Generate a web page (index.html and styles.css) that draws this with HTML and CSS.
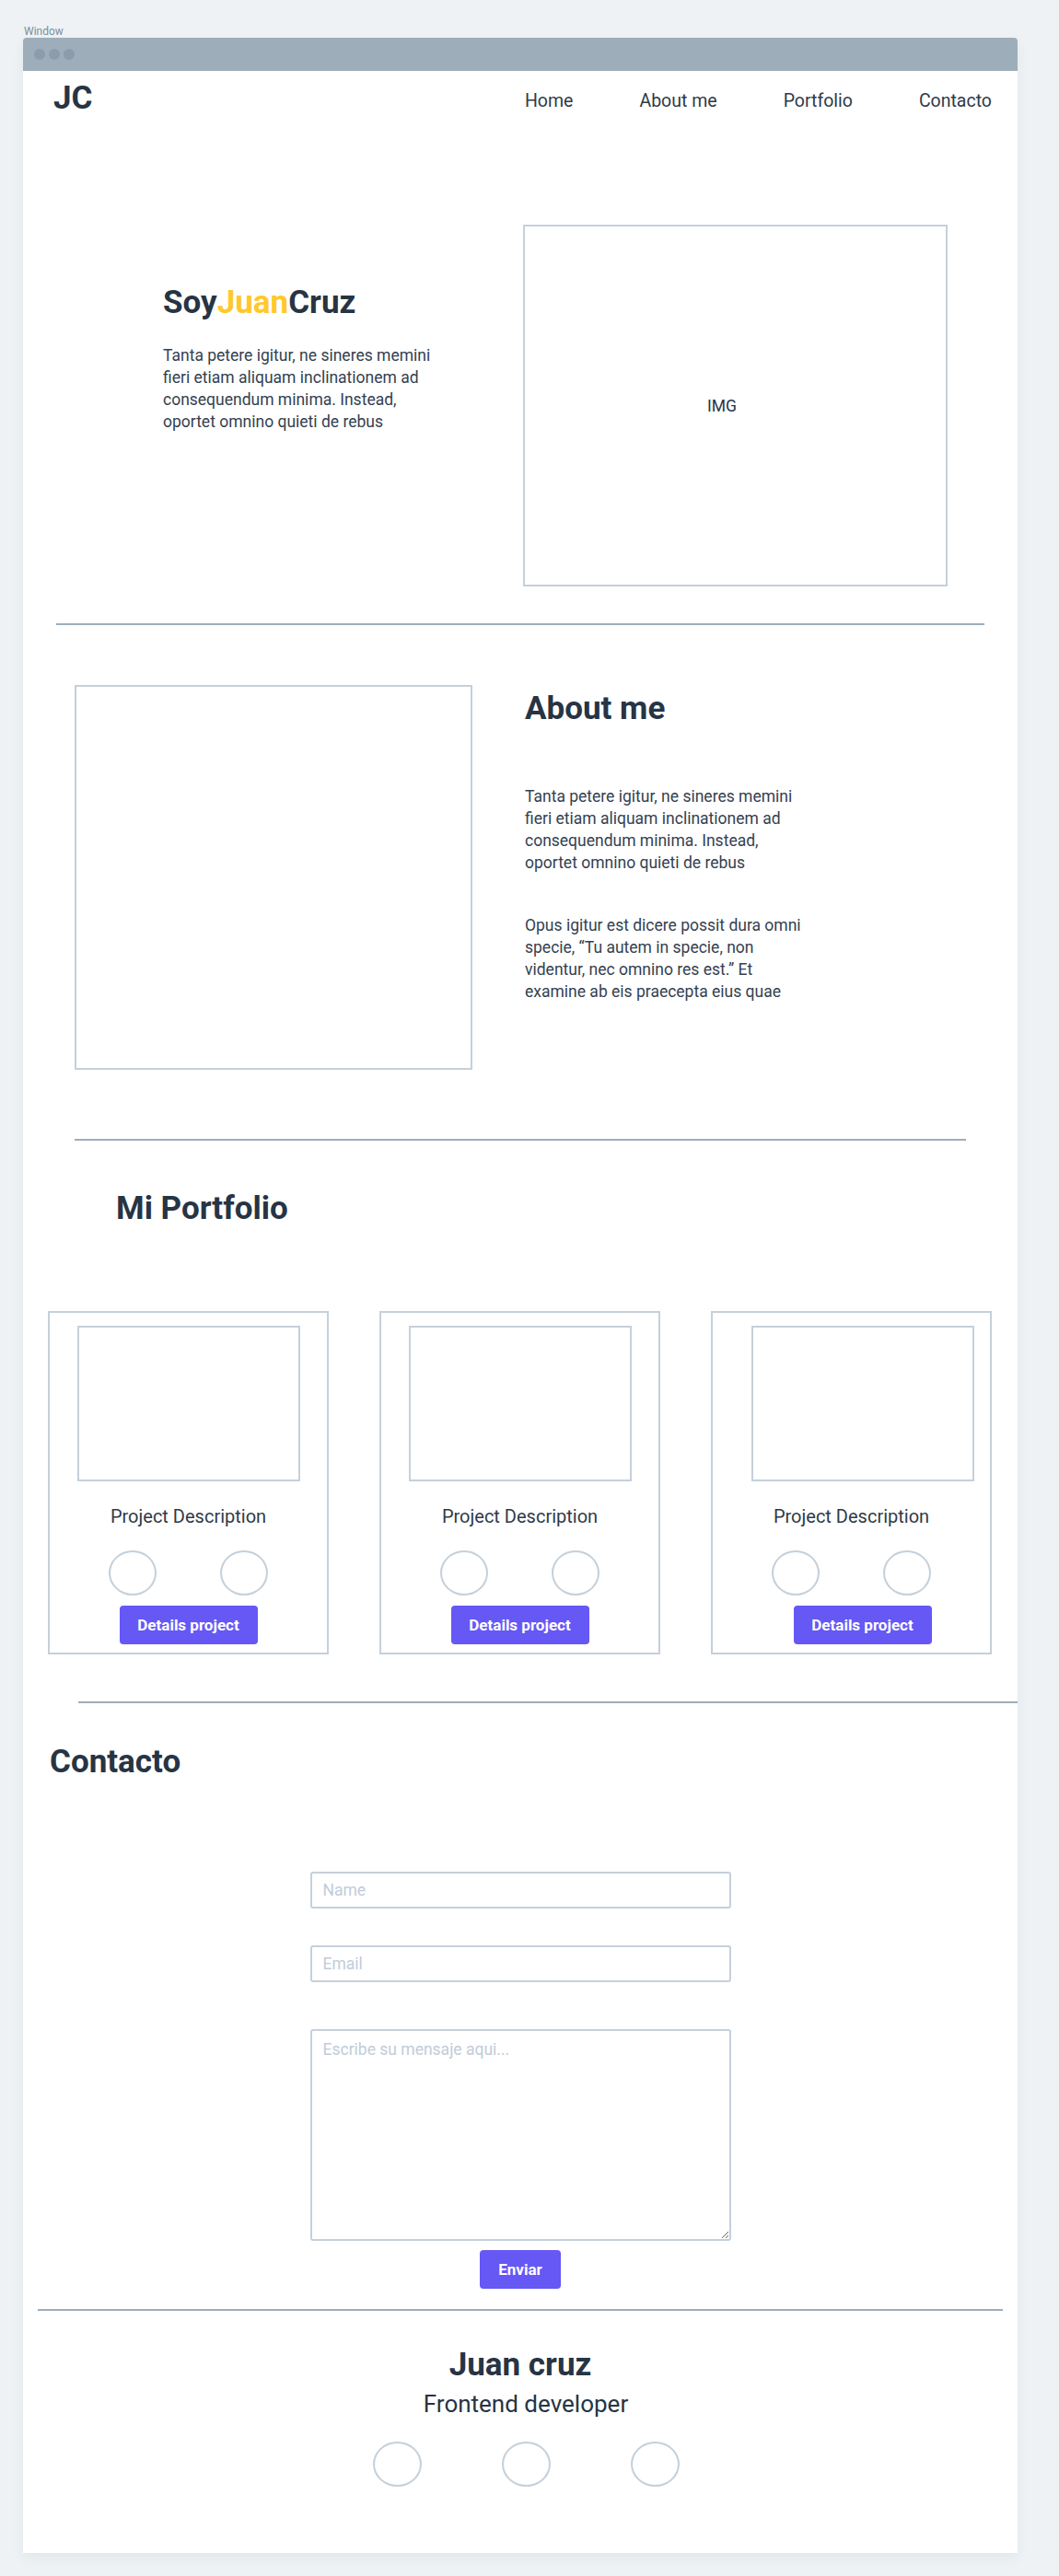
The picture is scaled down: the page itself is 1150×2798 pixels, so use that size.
FILE: index.html
```html
<!DOCTYPE html>
<html lang="es">
<head>
<meta charset="utf-8">
<title>Juan Cruz</title>
<link rel="stylesheet" href="styles.css">
</head>
<body>
<div class="page">
  <div class="label">Window</div>
  <div class="window">
    <div class="titlebar"><span class="dot"></span><span class="dot"></span><span class="dot"></span></div>
    <div class="content">
      <header class="header">
        <div class="logo">JC</div>
        <nav class="nav">
          <a href="#">Home</a>
          <a href="#">About me</a>
          <a href="#">Portfolio</a>
          <a href="#">Contacto</a>
        </nav>
      </header>

      <section class="hero">
        <div class="hero-text">
          <h1 class="title">Soy<span class="accent">Juan</span>Cruz</h1>
          <p class="text">Tanta petere igitur, ne sineres memini<br>fieri etiam aliquam inclinationem ad<br>consequendum minima. Instead,<br>oportet omnino quieti de rebus</p>
        </div>
        <div class="img-box hero-img"><span>IMG</span></div>
      </section>

      <div class="divider divider-1"></div>

      <section class="about">
        <div class="img-box about-img"></div>
        <div class="about-text">
          <h2 class="title">About me</h2>
          <p class="text">Tanta petere igitur, ne sineres memini<br>fieri etiam aliquam inclinationem ad<br>consequendum minima. Instead,<br>oportet omnino quieti de rebus</p>
          <p class="text">Opus igitur est dicere possit dura omni<br>specie, “Tu autem in specie, non<br>videntur, nec omnino res est.” Et<br>examine ab eis praecepta eius quae</p>
        </div>
      </section>

      <div class="divider divider-2"></div>

      <section class="portfolio">
        <h2 class="title portfolio-title">Mi Portfolio</h2>
        <div class="cards">
          <div class="card">
            <div class="img-box card-media"></div>
            <div class="card-desc">Project Description</div>
            <div class="card-links"><span class="circle"></span><span class="circle"></span></div>
            <button class="btn card-btn" type="button">Details project</button>
          </div>
          <div class="card">
            <div class="img-box card-media"></div>
            <div class="card-desc">Project Description</div>
            <div class="card-links"><span class="circle"></span><span class="circle"></span></div>
            <button class="btn card-btn" type="button">Details project</button>
          </div>
          <div class="card card--offset">
            <div class="img-box card-media"></div>
            <div class="card-desc">Project Description</div>
            <div class="card-links"><span class="circle"></span><span class="circle"></span></div>
            <button class="btn card-btn" type="button">Details project</button>
          </div>
        </div>
      </section>

      <div class="divider divider-3"></div>

      <section class="contact">
        <h2 class="title contact-title">Contacto</h2>
        <form class="form">
          <input class="field" type="text" placeholder="Name">
          <input class="field" type="email" placeholder="Email">
          <textarea class="field message" placeholder="Escribe su mensaje aqui..."></textarea>
          <button class="btn send" type="button">Enviar</button>
        </form>
      </section>

      <div class="divider divider-4"></div>

      <footer class="footer">
        <h2 class="title">Juan cruz</h2>
        <p class="footer-role">Frontend developer</p>
        <div class="footer-links"><span class="circle"></span><span class="circle"></span><span class="circle"></span></div>
      </footer>
    </div>
  </div>
</div>
</body>
</html>
```

FILE: styles.css
```css
* { box-sizing: border-box; }

body {
  margin: 0;
  min-height: 2798px;
  background: #eef2f5;
  font-family: Roboto, "Liberation Sans", sans-serif;
  color: #273444;
}

.page { padding: 27px 0 0 25px; }

.label {
  font-size: 12px;
  line-height: 14px;
  color: #7f8d9b;
  padding-left: 1px;
}

.window {
  width: 1080px;
  background: #fff;
  border-radius: 4px 4px 0 0;
  box-shadow: 0 6px 14px rgba(40, 60, 80, 0.06);
}

.titlebar {
  height: 36px;
  background: #9eadba;
  border-radius: 4px 4px 0 0;
  display: flex;
  align-items: center;
  gap: 4px;
  padding-left: 12px;
}

.dot {
  width: 12px;
  height: 12px;
  border-radius: 50%;
  background: #8d9cab;
}

.header {
  height: 60px;
  display: flex;
  justify-content: space-between;
  align-items: flex-start;
  padding: 10px 28px 0 33px;
}

.logo {
  font-size: 35px;
  line-height: 40px;
  font-weight: 700;
}

.nav {
  display: flex;
  gap: 72px;
  margin-top: 11px;
  font-size: 19.5px;
  line-height: 24px;
}

.nav a { color: #2f3b48; text-decoration: none; }

.title {
  margin: 0;
  font-size: 35px;
  line-height: 40px;
  font-weight: 700;
  color: #273444;
}

.accent { color: #ffc82c; }

.text {
  margin: 0;
  font-size: 17.5px;
  line-height: 24px;
  color: #344150;
}

.img-box { border: 2px solid #c5d0da; }

.hero {
  display: flex;
  padding-top: 107px;
}

.hero-text {
  width: 391px;
  margin-left: 152px;
  margin-top: 65px;
}

.hero-text .text { margin-top: 25px; }

.hero-img {
  width: 461px;
  height: 393px;
  display: flex;
  align-items: center;
  justify-content: center;
  padding-right: 29px;
  font-size: 17.5px;
  color: #273444;
}

.divider {
  height: 2px;
  background: #9eadba;
}

.divider-1 { margin: 40px 36px 0; }

.about {
  display: flex;
  padding-top: 65px;
}

.about-img {
  width: 432px;
  height: 418px;
  margin-left: 56px;
}

.about-text {
  margin-left: 57px;
  margin-top: 6px;
}

.about-text .text { margin-top: 63px; }
.about-text .text + .text { margin-top: 44px; }

.divider-2 { margin: 75px 56px 0; }

.portfolio-title { margin: 54px 0 0 101px; }

.cards {
  display: flex;
  gap: 55px;
  padding: 0 28px 0 27px;
  margin-top: 91px;
}

.card {
  width: 305px;
  height: 373px;
  border: 2px solid #c5d0da;
  padding-top: 14px;
  display: flex;
  flex-direction: column;
  align-items: center;
}

.card-media {
  width: 242px;
  height: 169px;
}

.card-desc {
  margin-top: 26px;
  font-size: 20px;
  line-height: 24px;
  color: #2f3b48;
}

.card-links {
  display: flex;
  gap: 69px;
  margin-top: 25px;
}

.circle {
  display: block;
  width: 52px;
  height: 49px;
  border: 2px solid #c5d0da;
  border-radius: 50%;
}

.btn {
  background: #6558f5;
  color: #fff;
  font-family: inherit;
  font-weight: 700;
  font-size: 17px;
  border: 0;
  border-radius: 4px;
  padding: 0;
}

.card-btn {
  margin-top: 11px;
  width: 150px;
  height: 42px;
}

.card--offset .card-media,
.card--offset .card-btn { margin-left: 24px; }

.divider-3 { margin: 51px 0 0 60px; }

.contact-title { margin: 44px 0 0 29px; }

.form {
  width: 457px;
  margin: 99px auto 0;
  display: flex;
  flex-direction: column;
  align-items: center;
}

.field {
  display: block;
  width: 100%;
  height: 40px;
  margin: 0;
  border: 2px solid #c5d0da;
  border-radius: 3px;
  padding: 0 12px;
  font-family: inherit;
  font-size: 17.5px;
  color: #273444;
  background: #fff;
  outline: none;
}

.field::placeholder { color: #c0ccda; }

.field + .field { margin-top: 40px; }

.message {
  height: 230px;
  margin-top: 51px;
  padding: 9px 12px;
  line-height: 22px;
  resize: both;
}

.field + .message { margin-top: 51px; }

.send {
  margin-top: 10px;
  width: 88px;
  height: 42px;
}

.divider-4 { margin: 22px 16px 0; }

.footer {
  padding: 39px 0 72px;
  display: flex;
  flex-direction: column;
  align-items: center;
}

.footer-role {
  margin: 7px 0 0;
  padding-left: 12px;
  font-size: 26px;
  line-height: 30px;
  color: #273444;
}

.footer-links {
  display: flex;
  gap: 87px;
  margin-top: 26px;
  padding-left: 12px;
}

.footer-links .circle { width: 53px; }
```
